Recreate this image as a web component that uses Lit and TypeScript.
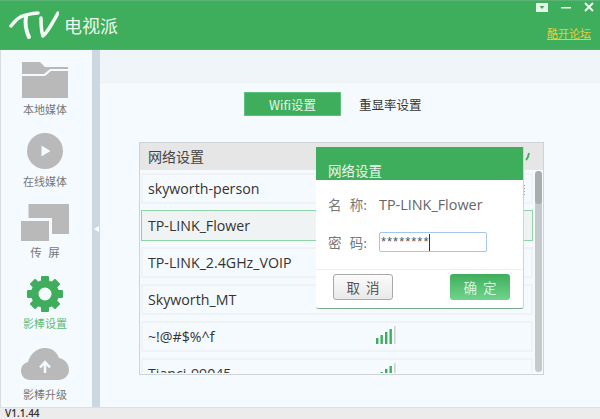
import { LitElement, html, css, svg } from "lit";
import { customElement } from "lit/decorators.js";

const signal = svg`<svg width="20" height="18" viewBox="0 0 20 18"><g fill="#3fae5c"><rect x="0" y="12" width="2.4" height="6"/><rect x="4.5" y="9" width="2.4" height="9"/><rect x="9" y="6" width="2.4" height="12"/><rect x="13.5" y="3" width="2.4" height="15"/></g><rect x="18" y="0" width="1.600" height="18" fill="#cfd3d3"/></svg>`;

@customElement("app-root")
export class AppRoot extends LitElement {
  static styles = css`
    :host { display: block; width: 600px; height: 419px; font-family: "Microsoft YaHei", "Noto Sans CJK SC", "Open Sans", sans-serif; overflow: hidden; position: relative; background: #f5faff; }
    .app { display: flex; flex-direction: column; height: 419px; }
    .head { height: 50px; box-sizing: border-box; background: #3fae5c; border-top: 1px solid #5cb377; border-bottom: 1px solid #49b364; display: flex; justify-content: space-between; flex: none; }
    .brand { display: flex; align-items: center; padding-left: 9px; gap: 5px; }
    .brand span { color: #eef8f0; font-size: 18px; line-height: 24px; }
    .tools { display: flex; flex-direction: column; align-items: flex-end; padding-right: 6px; }
    .win { display: flex; align-items: center; gap: 13px; height: 10px; padding-top: 1px; }
    .forum { color: #e8cb3a; font-size: 11px; text-decoration: underline; line-height: 14px; margin: 14px 3px 0 0; }
    .body { flex: 1; display: flex; min-height: 0; }
    .side { width: 92px; box-sizing: border-box; border-left: 1px solid #d9dcdc; background: #f5faff; display: flex; flex-direction: column; align-items: center; flex: none; padding: 12px 3px 0 0; }
    .item { display: flex; flex-direction: column; align-items: center; color: #777; font-size: 11px; line-height: 14px; gap: 4px; margin-bottom: 17px; }
    .item svg { display: block; }
    .item.on { color: #5cbc78; margin-bottom: 18px; }
    .item.play { gap: 5px; margin-bottom: 16px; }
    .item.cloud { gap: 7px; }
    .item .wide { word-spacing: 4px; font-size: 11.500px; }
    .split { width: 8px; background: #cbd8e2; flex: none; display: flex; align-items: center; justify-content: center; }
    .split i { width: 0; height: 0; border: 3.5px solid transparent; border-right: 5px solid #fff; border-left: 0; }
    .main { flex: 1; min-width: 0; display: flex; flex-direction: column; }
    .strip { height: 32px; background: #f0f5f9; border-bottom: 1px solid #edf1f4; flex: none; }
    .tabs { display: flex; align-items: center; padding: 9px 0 0 144px; height: 24px; flex: none; }
    .tab { width: 97px; height: 24px; box-sizing: border-box; background: #3fae5c; border: 1px solid #5cc17a; color: #e6f5ea; font-size: 12.500px; display: flex; align-items: center; justify-content: center; }
    .tab2 { margin-left: 18px; color: #333; font-size: 12.500px; }
    .table { margin: 26px 0 0 39px; width: 405px; height: 233px; box-sizing: border-box; border: 1px solid #cfd3d3; background: #f5faff; overflow: hidden; position: relative; flex: none; }
    .thead { height: 27px; background: #e6e6e6; color: #444; font-size: 14px; line-height: 27px; padding: 0 13px 0 8px; display: flex; justify-content: space-between; align-items: center; }
    .rows { padding: 3px 10px 0 1px; display: flex; flex-direction: column; gap: 6px; height: 200px; overflow: hidden; }
    .row { height: 31px; flex: none; box-sizing: border-box; border: 2px solid #eff3f6; display: flex; align-items: center; padding-left: 5px; font-size: 14.200px; color: #333; position: relative; font-family: "Open Sans", sans-serif; }
    .row.sel { background: #f0f3f3; border: 1px solid #8fd2a4; padding-left: 6px; }
    .row .sig { position: absolute; left: 233px; top: 3px; height: 18px; }
    .row .dots { position: absolute; left: 381px; top: 10px; width: 1px; height: 10px; background: repeating-linear-gradient(#9aa0a0 0 1px, transparent 1px 3px); }
    .scroll { position: absolute; right: 1px; top: 28px; width: 7px; height: 201px; border-radius: 4px; background: #c5c9ca; }
    .scroll i { display: block; height: 33px; border-radius: 4px; background: #a9adad; }
    .foot { height: 11px; background: #ececec; border-top: 1px solid #dfdfdf; flex: none; font-size: 10px; line-height: 11px; color: #333; padding-left: 5px; font-family: "Open Sans", sans-serif; font-weight: 600; }
    .modal { position: absolute; left: 316px; top: 147px; width: 208px; height: 162px; box-sizing: border-box; background: #fff; border-bottom: 1px solid #7cab8b; border-right: 1px solid #cfd5d2; border-radius: 0 0 3px 3px; display: flex; flex-direction: column; }
    .mhead { height: 33px; background: #3fae5c; flex: none; color: #e9f7ed; font-size: 13.500px; line-height: 20px; padding: 13px 0 0 12px; box-sizing: border-box; }
    .mbody { flex: 1; display: flex; flex-direction: column; padding: 14px 0 0 12px; }
    .field { display: flex; align-items: center; height: 20px; color: #777; font-size: 13.500px; }
    .field + .field { margin-top: 18px; }
    .lab { width: 39px; flex: none; display: flex; justify-content: space-between; }
    .name { margin-left: 12px; font-family: "Open Sans", sans-serif; font-size: 14.400px; color: #666; }
    .input { margin-left: 12px; width: 108px; height: 20px; box-sizing: border-box; border: 1px solid #a5c6ea; border-radius: 2px; background: #fff; color: #555; font: 13px/18px "Liberation Sans", sans-serif; letter-spacing: 1px; padding-left: 1px; display: flex; align-items: center; }
    .input i { width: 1px; height: 17px; background: #333; }
    .mfoot { height: 39px; flex: none; box-sizing: border-box; border-top: 1px solid #eeeeee; display: flex; justify-content: space-between; padding: 4px 13px 0 17px; }
    .btn { width: 60px; height: 26px; box-sizing: border-box; border-radius: 3px; font-size: 13.500px; display: flex; align-items: center; justify-content: center; gap: 6px; }
    .cancel { border: 1px solid #a9a9a9; background: linear-gradient(#fbfbfb, #e9e9e9); color: #555; }
    .ok { background: linear-gradient(#3fae5c, #6fd48c); color: #d6f3df; }
  `;

  render() {
    const rows: [string, boolean, boolean][] = [
      ["skyworth-person", false, false], ["TP-LINK_Flower", true, false], ["TP-LINK_2.4GHz_VOIP", false, false],
      ["Skyworth_MT", false, false], ["~!@#$%^f", false, true], ["Tianci-99045", false, true],
    ];
    return html`<div class="app">
      <div class="head">
        <div class="brand">
          <svg width="50" height="36" viewBox="0 0 50 36"><g fill="none" stroke="#f4fbf6" stroke-linecap="round" stroke-linejoin="round"><path d="M2 19 C6 14 10 9 17 8 C21 7 25 6 29 6" stroke-width="3.500"/><path d="M17 9 C16 16 17 24 20 30" stroke-width="4"/><path d="M32 11 C32 17 32 24 34 29 C39 25 44 15 49 6" stroke-width="3.500"/></g></svg>
          <span>电视派</span>
        </div>
        <div class="tools">
          <div class="win">
            <svg width="12" height="9" viewBox="0 0 12 9"><rect x=".5" y=".5" width="11" height="8" fill="#e6f5ea" stroke="#e6f5ea"/><path d="M3.500 3H8.500L6 6z" fill="#3fae5c"/></svg>
            <svg width="10" height="9" viewBox="0 0 10 9"><rect x="0" y="4" width="10" height="1.500" fill="#f2faf4"/></svg>
            <svg width="10" height="10" viewBox="0 0 10 10"><path d="M1 1L9 9M9 1L1 9" stroke="#f7fcf8" stroke-width="1.800"/></svg>
          </div>
          <div class="forum">酷开论坛</div>
        </div>
      </div>
      <div class="body">
        <div class="side">
          <div class="item">
            <svg width="46" height="36" viewBox="0 0 46 36"><path d="M0 0H18L23 5H46V7H28L22 12H0z" fill="#b9b9b9"/><path d="M0 14H23L29 9H46V36H0z" fill="#b9b9b9"/></svg>
            <span>本地媒体</span>
          </div>
          <div class="item play">
            <svg width="36" height="36" viewBox="0 0 36 36"><circle cx="18" cy="18" r="18" fill="#b9b9b9"/><path d="M14.500 12.500L23.500 18L14.500 23.500z" fill="#f5faff"/></svg>
            <span>在线媒体</span>
          </div>
          <div class="item">
            <svg width="48" height="37" viewBox="0 0 48 37"><path d="M7.500 0H48V30H31V14H7.500z" fill="#b9b9b9"/><rect x="0" y="17" width="28" height="20" fill="#b9b9b9"/></svg>
            <span class="wide">传 屏</span>
          </div>
          <div class="item on">
            <svg width="36" height="36" viewBox="0 0 36 36"><g fill="#3fae5c"><circle cx="18" cy="18" r="14"/><rect x="14" y="0" width="8" height="36" rx="1"/><rect x="14" y="0" width="8" height="36" rx="1" transform="rotate(45 18 18)"/><rect x="14" y="0" width="8" height="36" rx="1" transform="rotate(90 18 18)"/><rect x="14" y="0" width="8" height="36" rx="1" transform="rotate(135 18 18)"/></g><circle cx="18" cy="18" r="6.500" fill="#f5faff"/></svg>
            <span>影棒设置</span>
          </div>
          <div class="item cloud">
            <svg width="48" height="32" viewBox="0 0 48 32"><path d="M9 32C4 32 0 28 0 23C0 18 3 15 7 14C9 6 16 0 24 0C31 0 36 4 38 10C44 11 48 16 48 22C48 28 43 32 37 32z" fill="#b9b9b9"/><path d="M24 25V15M19 19.500L24 14L29 19.500" fill="none" stroke="#f5faff" stroke-width="2.500"/></svg>
            <span>影棒升级</span>
          </div>
        </div>
        <div class="split"><i></i></div>
        <div class="main">
          <div class="strip"></div>
          <div class="tabs"><div class="tab">Wifi设置</div><div class="tab2">重显率设置</div></div>
          <div class="table">
            <div class="thead"><span>网络设置</span><svg width="5" height="9" viewBox="0 0 5 9"><path d="M4 1C3.500 4 2.500 6.500 1 8" fill="none" stroke="#3fae5c" stroke-width="1.800"/></svg></div>
            <div class="rows">
              ${rows.map(([n, sel, sig], i) => html`<div class="row ${sel ? "sel" : ""}">${n}${sig ? html`<span class="sig">${signal}</span>` : ""}${i === 0 ? html`<span class="dots"></span>` : ""}</div>`)}
            </div>
            <div class="scroll"><i></i></div>
          </div>
        </div>
      </div>
      <div class="foot">V1.1.44</div>
    </div>
    <div class="modal">
      <div class="mhead">网络设置</div>
      <div class="mbody">
        <div class="field"><div class="lab"><span>名</span><span>称:</span></div><div class="name">TP-LINK_Flower</div></div>
        <div class="field"><div class="lab"><span>密</span><span>码:</span></div><div class="input">********<i></i></div></div>
      </div>
      <div class="mfoot">
        <div class="btn cancel"><span>取</span><span>消</span></div>
        <div class="btn ok"><span>确</span><span>定</span></div>
      </div>
    </div>`;
  }
}
